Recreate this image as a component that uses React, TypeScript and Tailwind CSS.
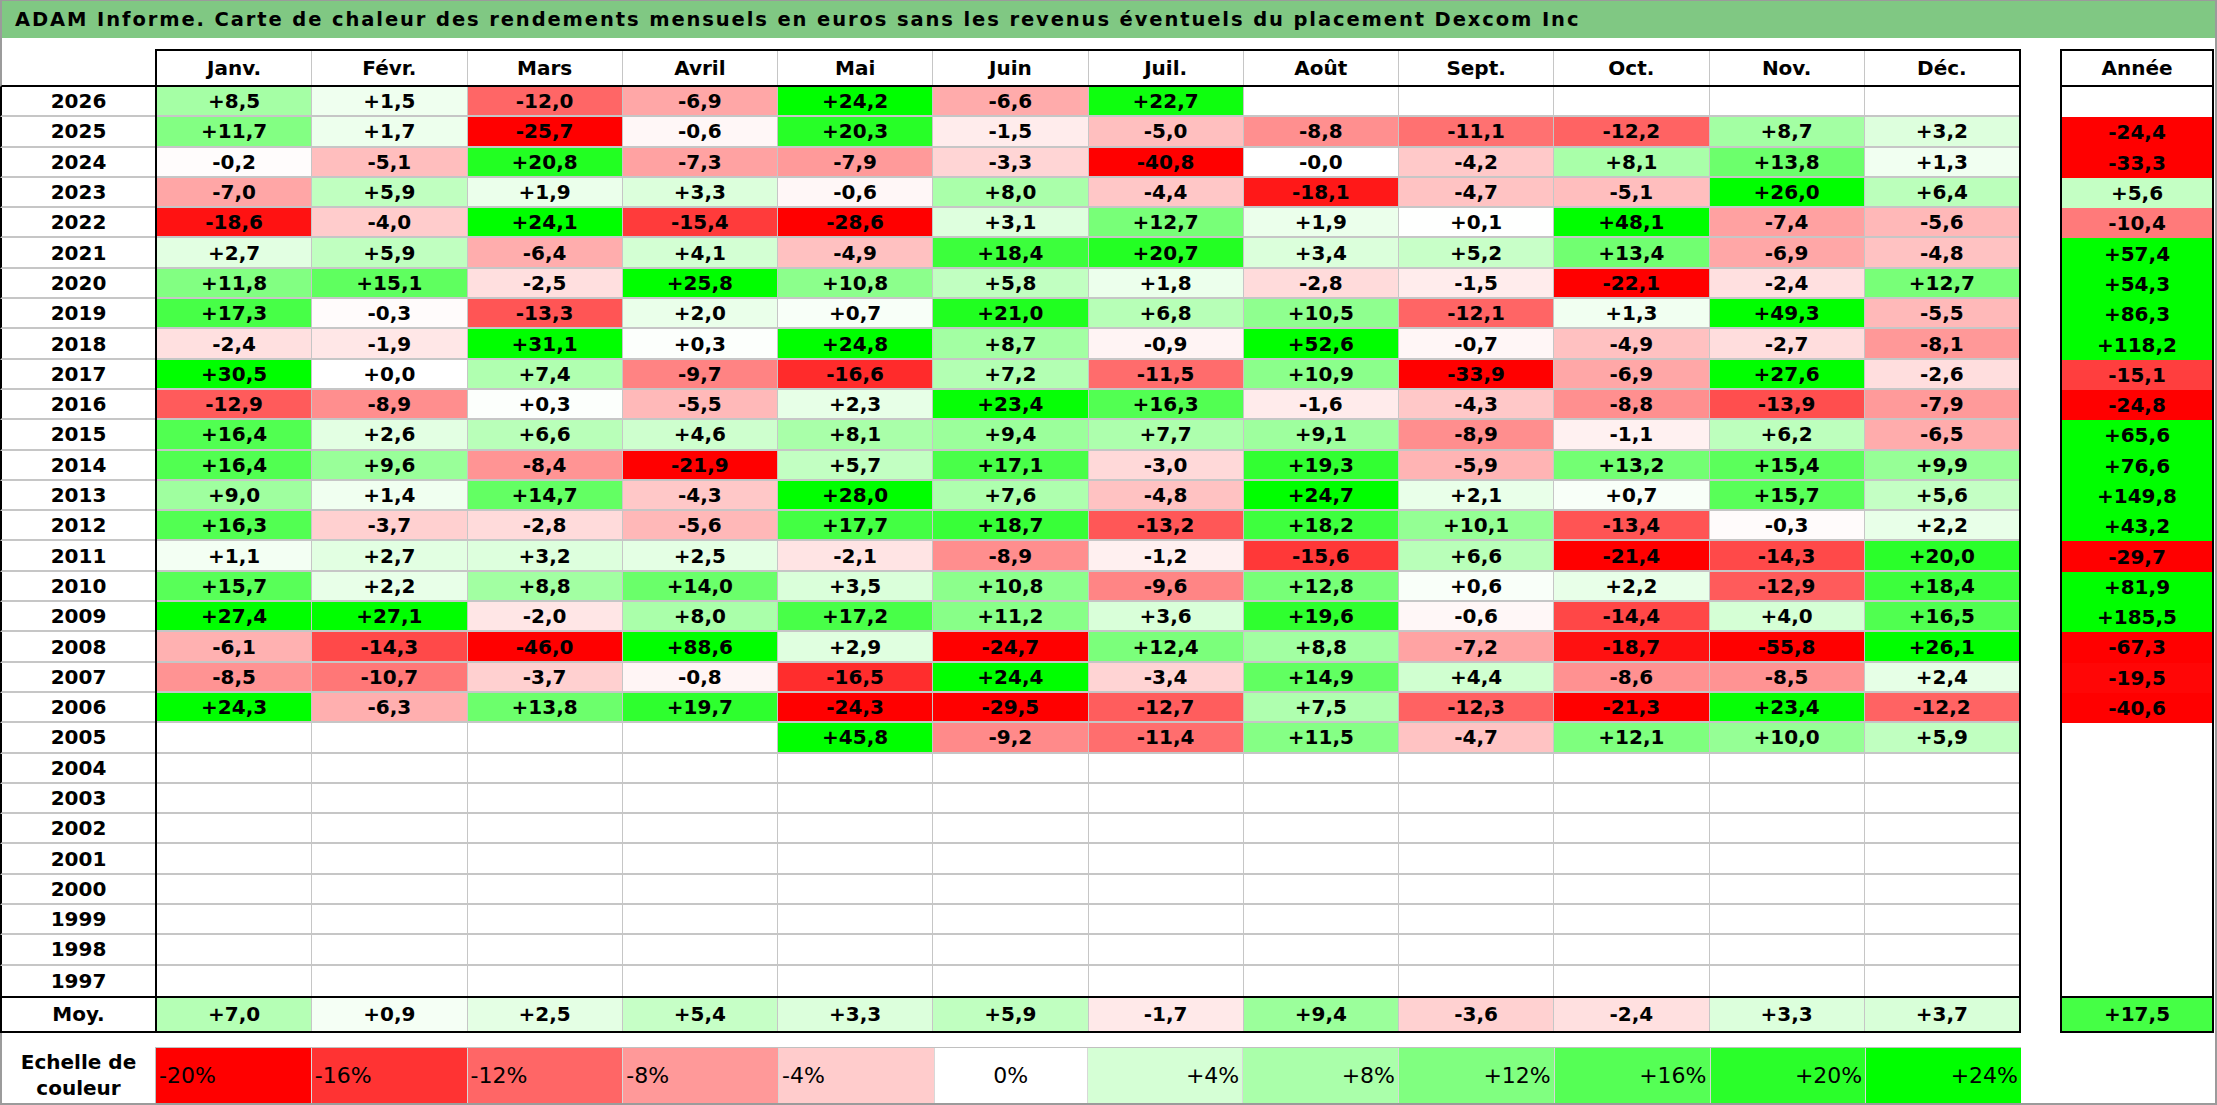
import React from 'react';

const MONTHS = ['Janv.', 'Févr.', 'Mars', 'Avril', 'Mai', 'Juin', 'Juil.', 'Août', 'Sept.', 'Oct.', 'Nov.', 'Déc.'];

// année | 12 mois | total annuel  ('.' = vide)
const DATA: [string, string, string][] = [
  ['2026', '+8,5 +1,5 -12,0 -6,9 +24,2 -6,6 +22,7 . . . . .', '.'],
  ['2025', '+11,7 +1,7 -25,7 -0,6 +20,3 -1,5 -5,0 -8,8 -11,1 -12,2 +8,7 +3,2', '-24,4'],
  ['2024', '-0,2 -5,1 +20,8 -7,3 -7,9 -3,3 -40,8 -0,0 -4,2 +8,1 +13,8 +1,3', '-33,3'],
  ['2023', '-7,0 +5,9 +1,9 +3,3 -0,6 +8,0 -4,4 -18,1 -4,7 -5,1 +26,0 +6,4', '+5,6'],
  ['2022', '-18,6 -4,0 +24,1 -15,4 -28,6 +3,1 +12,7 +1,9 +0,1 +48,1 -7,4 -5,6', '-10,4'],
  ['2021', '+2,7 +5,9 -6,4 +4,1 -4,9 +18,4 +20,7 +3,4 +5,2 +13,4 -6,9 -4,8', '+57,4'],
  ['2020', '+11,8 +15,1 -2,5 +25,8 +10,8 +5,8 +1,8 -2,8 -1,5 -22,1 -2,4 +12,7', '+54,3'],
  ['2019', '+17,3 -0,3 -13,3 +2,0 +0,7 +21,0 +6,8 +10,5 -12,1 +1,3 +49,3 -5,5', '+86,3'],
  ['2018', '-2,4 -1,9 +31,1 +0,3 +24,8 +8,7 -0,9 +52,6 -0,7 -4,9 -2,7 -8,1', '+118,2'],
  ['2017', '+30,5 +0,0 +7,4 -9,7 -16,6 +7,2 -11,5 +10,9 -33,9 -6,9 +27,6 -2,6', '-15,1'],
  ['2016', '-12,9 -8,9 +0,3 -5,5 +2,3 +23,4 +16,3 -1,6 -4,3 -8,8 -13,9 -7,9', '-24,8'],
  ['2015', '+16,4 +2,6 +6,6 +4,6 +8,1 +9,4 +7,7 +9,1 -8,9 -1,1 +6,2 -6,5', '+65,6'],
  ['2014', '+16,4 +9,6 -8,4 -21,9 +5,7 +17,1 -3,0 +19,3 -5,9 +13,2 +15,4 +9,9', '+76,6'],
  ['2013', '+9,0 +1,4 +14,7 -4,3 +28,0 +7,6 -4,8 +24,7 +2,1 +0,7 +15,7 +5,6', '+149,8'],
  ['2012', '+16,3 -3,7 -2,8 -5,6 +17,7 +18,7 -13,2 +18,2 +10,1 -13,4 -0,3 +2,2', '+43,2'],
  ['2011', '+1,1 +2,7 +3,2 +2,5 -2,1 -8,9 -1,2 -15,6 +6,6 -21,4 -14,3 +20,0', '-29,7'],
  ['2010', '+15,7 +2,2 +8,8 +14,0 +3,5 +10,8 -9,6 +12,8 +0,6 +2,2 -12,9 +18,4', '+81,9'],
  ['2009', '+27,4 +27,1 -2,0 +8,0 +17,2 +11,2 +3,6 +19,6 -0,6 -14,4 +4,0 +16,5', '+185,5'],
  ['2008', '-6,1 -14,3 -46,0 +88,6 +2,9 -24,7 +12,4 +8,8 -7,2 -18,7 -55,8 +26,1', '-67,3'],
  ['2007', '-8,5 -10,7 -3,7 -0,8 -16,5 +24,4 -3,4 +14,9 +4,4 -8,6 -8,5 +2,4', '-19,5'],
  ['2006', '+24,3 -6,3 +13,8 +19,7 -24,3 -29,5 -12,7 +7,5 -12,3 -21,3 +23,4 -12,2', '-40,6'],
  ['2005', '. . . . +45,8 -9,2 -11,4 +11,5 -4,7 +12,1 +10,0 +5,9', '.'],
  ['2004', '. . . . . . . . . . . .', '.'],
  ['2003', '. . . . . . . . . . . .', '.'],
  ['2002', '. . . . . . . . . . . .', '.'],
  ['2001', '. . . . . . . . . . . .', '.'],
  ['2000', '. . . . . . . . . . . .', '.'],
  ['1999', '. . . . . . . . . . . .', '.'],
  ['1998', '. . . . . . . . . . . .', '.'],
  ['1997', '. . . . . . . . . . . .', '.'],
];

const AVG = '+7,0 +0,9 +2,5 +5,4 +3,3 +5,9 -1,7 +9,4 -3,6 -2,4 +3,3 +3,7'.split(' ');
const AVG_YEAR = '+17,5';

const SCALE = [-20, -16, -12, -8, -4, 0, 4, 8, 12, 16, 20, 24];

// échelle à 3 couleurs : -20% rouge, 0 blanc, +24% vert
function heat(v: number) {
  if (v < 0) {
    const c = Math.round(255 * (1 - Math.min(-v / 20, 1)));
    return `rgb(255,${c},${c})`;
  }
  const c = Math.round(255 * (1 - Math.min(v / 24, 1)));
  return `rgb(${c},255,${c})`;
}

function cellBg(s: string) {
  if (s === '.') return undefined;
  return { backgroundColor: heat(parseFloat(s.replace(',', '.'))) };
}

const txt = (s: string) => (s === '.' ? '' : s);

export default function App() {
  return (
    <div className="w-[2217px] h-[1105px] bg-white border-t border-r-2 border-b-2 border-[#9b9b9b] overflow-hidden font-['DejaVu_Sans',sans-serif] font-bold text-[20px] text-black">
      {/* Titre */}
      <div className="h-[37px] bg-[#80c883] border-l-2 border-[#9b9b9b] pl-[13px] flex items-center text-[19.5px] tracking-[1.9px] whitespace-nowrap">
        ADAM Informe. Carte de chaleur des rendements mensuels en euros sans les revenus éventuels du placement Dexcom Inc
      </div>
      <div className="h-[11px] border-l-2 border-[#9b9b9b]" />

      {/* En-tête */}
      <div className="flex h-[38px]">
        <div className="w-[155px] border-l-2 border-l-[#9b9b9b] border-b-2 border-b-black" />
        <div className="w-[1866px] flex border-2 border-black">
          {MONTHS.map((m, i) => (
            <div
              key={m}
              className={`flex-1 basis-0 flex items-center justify-center ${i < 11 ? 'border-r border-[#c6c6c6]' : ''}`}
            >
              {m}
            </div>
          ))}
        </div>
        <div className="w-[39px]" />
        <div className="w-[154px] border-2 border-black flex items-center justify-center">Année</div>
      </div>

      {/* Lignes des années */}
      {DATA.map(([year, months, total], r) => {
        const last = r === DATA.length - 1;
        const vals = months.split(' ');
        return (
          <div key={year} className="flex h-[30.3px]">
            <div
              className={`w-[155px] border-l-2 border-l-black flex items-center justify-center ${last ? '' : 'border-b-2 border-b-[#c6c6c6]'}`}
            >
              {year}
            </div>
            <div className="w-[1866px] flex border-x-2 border-black">
              {vals.map((v, i) => (
                <div
                  key={i}
                  style={cellBg(v)}
                  className={`flex-1 basis-0 flex items-center justify-center ${i < 11 ? 'border-r border-r-[#c6c6c6]' : ''} ${last ? '' : 'border-b-2 border-b-[#c6c6c6]'}`}
                >
                  {txt(v)}
                </div>
              ))}
            </div>
            <div className="w-[39px]" />
            <div style={cellBg(total)} className="w-[154px] border-x-2 border-black flex items-center justify-center">
              {txt(total)}
            </div>
          </div>
        );
      })}

      {/* Moyenne */}
      <div className="flex h-[37px]">
        <div className="w-[155px] border-l-2 border-y-2 border-black flex items-center justify-center">Moy.</div>
        <div className="w-[1866px] flex border-2 border-black">
          {AVG.map((v, i) => (
            <div
              key={i}
              style={cellBg(v)}
              className={`flex-1 basis-0 flex items-center justify-center ${i < 11 ? 'border-r border-[#c6c6c6]' : ''}`}
            >
              {v}
            </div>
          ))}
        </div>
        <div className="w-[39px]" />
        <div style={cellBg(AVG_YEAR)} className="w-[154px] border-2 border-black flex items-center justify-center">
          {AVG_YEAR}
        </div>
      </div>

      <div className="h-[14px] border-l-2 border-[#9b9b9b]" />

      {/* Echelle de couleur */}
      <div className="flex h-[56px]">
        <div className="w-[155px] border-l-2 border-[#9b9b9b] flex flex-col items-center justify-center leading-[26px]">
          <span>Echelle de</span>
          <span>couleur</span>
        </div>
        <div className="w-[1866px] flex border-t border-l border-[#c0c0c0]">
          {SCALE.map((s, i) => {
            const label = s > 0 ? `+${s}%` : `${s}%`;
            const align = s < 0 ? 'justify-start pl-[3px]' : s > 0 ? 'justify-end pr-[3px]' : 'justify-center';
            return (
              <div
                key={s}
                style={{ backgroundColor: heat(s) }}
                className={`flex-1 basis-0 flex items-center font-normal text-[22px] ${align} ${i < 11 ? 'border-r border-[#d8d8d8]' : ''}`}
              >
                {label}
              </div>
            );
          })}
        </div>
      </div>
    </div>
  );
}
